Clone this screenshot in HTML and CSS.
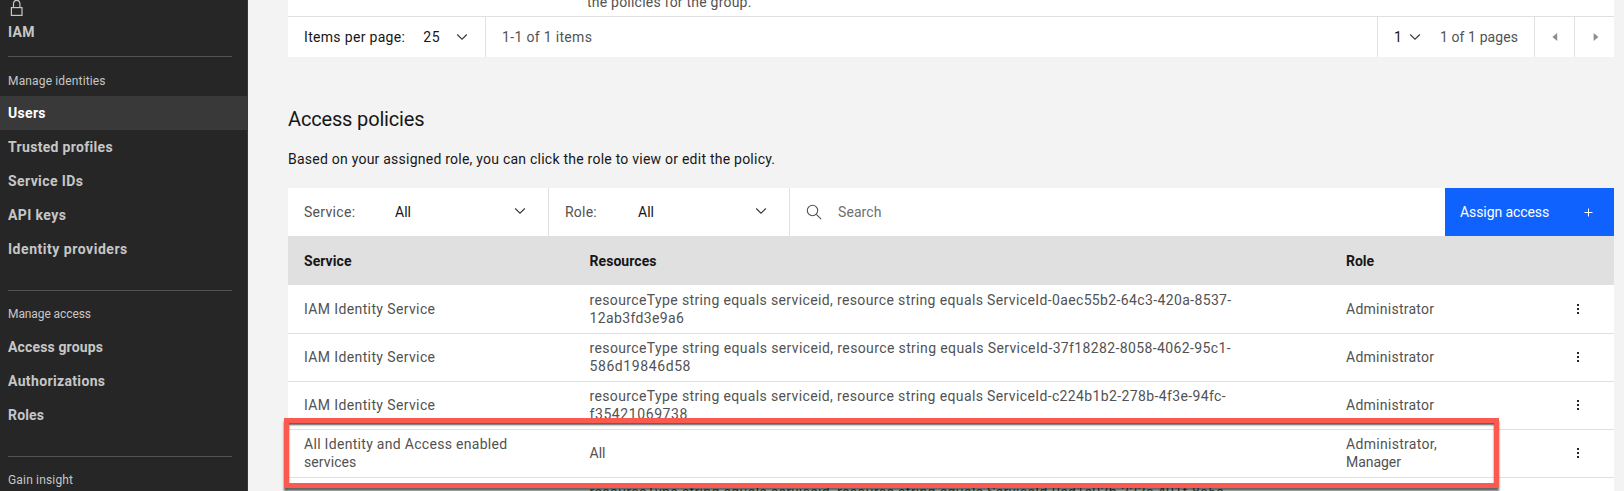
FILE: index.html
```
<!DOCTYPE html>
<html lang="en">
<head>
<meta charset="utf-8">
<title>IAM - Users</title>
<link rel="stylesheet" href="styles.css">
</head>
<body>
<div class="app">
  <nav class="sidebar">
    <div class="brand">
      <svg class="lock" width="16" height="18" viewBox="0 0 16 18" fill="none" stroke="#c6c6c6" stroke-width="1.2"><rect x="3.4" y="8.6" width="10.6" height="7.8"/><path d="M5.5 8.6V4.5a3.2 3.2 0 0 1 6.4 0v4.1"/></svg>
      <span class="brand-name ls30">IAM</span>
    </div>
    <section class="nav-group">
      <h2 class="nav-title ls15">Manage identities</h2>
      <a class="nav-item active ls30">Users</a>
      <a class="nav-item ls32">Trusted profiles</a>
      <a class="nav-item ls40">Service IDs</a>
      <a class="nav-item ls40">API keys</a>
      <a class="nav-item ls50">Identity providers</a>
    </section>
    <section class="nav-group">
      <h2 class="nav-title lsm9">Manage access</h2>
      <a class="nav-item ls15">Access groups</a>
      <a class="nav-item ls35">Authorizations</a>
      <a class="nav-item ls17">Roles</a>
    </section>
    <section class="nav-group">
      <h2 class="nav-title ls17">Gain insight</h2>
    </section>
  </nav>

  <main class="main">
    <div class="groups-tail"><span class="ls22">the policies for the group.</span></div>
    <div class="pagination">
      <div class="page-size">
        <span class="ls32">Items per page:</span>
        <span class="size-value">25</span>
        <svg class="chev" width="12" height="8" viewBox="0 0 12 8"><path d="M1.2 1.5 6 6.2l4.8-4.7"/></svg>
      </div>
      <span class="item-count ls33">1-1 of 1 items</span>
      <div class="page-pick">
        <span class="page-value">1</span>
        <svg class="chev" width="12" height="8" viewBox="0 0 12 8"><path d="M1.2 1.5 6 6.2l4.8-4.7"/></svg>
        <span class="page-total ls9">1 of 1 pages</span>
      </div>
      <div class="page-btn"><svg width="6" height="8" viewBox="0 0 6 8"><path d="M5.2 0v8L.4 4z" fill="#8d8d8d"/></svg></div>
      <div class="page-btn next"><svg width="6" height="8" viewBox="0 0 6 8"><path d="M.6 0v8l4.8-4z" fill="#8d8d8d"/></svg></div>
    </div>

    <h1 class="title">Access policies</h1>
    <p class="desc">Based on your assigned role, you can click the role to view or edit the policy.</p>

    <div class="toolbar">
      <div class="filter filter-service">
        <span class="filter-label ls30">Service:</span>
        <span class="filter-value">All</span>
        <svg class="chev" width="12" height="8" viewBox="0 0 12 8"><path d="M1.2 1.5 6 6.2l4.8-4.7"/></svg>
      </div>
      <div class="filter filter-role">
        <span class="filter-label ls22">Role:</span>
        <span class="filter-value">All</span>
        <svg class="chev" width="12" height="8" viewBox="0 0 12 8"><path d="M1.2 1.5 6 6.2l4.8-4.7"/></svg>
      </div>
      <div class="search">
        <svg width="16" height="16" viewBox="0 0 16 16" fill="none" stroke="#525252" stroke-width="1.1"><circle cx="6.5" cy="6.5" r="5.2"/><path d="m10.3 10.3 4.9 4.9"/></svg>
        <span class="ls9">Search</span>
      </div>
      <button class="assign"><span class="lsm9">Assign access</span><svg width="9" height="9" viewBox="0 0 9 9"><path d="M4.5.5v8M.5 4.5h8" stroke="#fff"/></svg></button>
    </div>

    <div class="table">
      <div class="row head"><span class="ls6">Service</span><span class="ls6">Resources</span><span>Role</span><span></span></div>
      <div class="row first">
        <span class="ls38">IAM Identity Service</span>
        <span class="ls37">resourceType string equals serviceid, resource string equals ServiceId-0aec55b2-64c3-420a-8537-<br>12ab3fd3e9a6</span>
        <span class="ls26">Administrator</span>
        <svg class="dots" width="2" height="10" viewBox="0 0 2 10"><path d="M0 0h2v2H0zM0 4h2v2H0zM0 8h2v2H0z"/></svg>
      </div>
      <div class="row">
        <span class="ls38">IAM Identity Service</span>
        <span class="ls38">resourceType string equals serviceid, resource string equals ServiceId-37f18282-8058-4062-95c1-<br><span class="ls59">586d19846d58</span></span>
        <span class="ls26">Administrator</span>
        <svg class="dots" width="2" height="10" viewBox="0 0 2 10"><path d="M0 0h2v2H0zM0 4h2v2H0zM0 8h2v2H0z"/></svg>
      </div>
      <div class="row">
        <span class="ls38">IAM Identity Service</span>
        <span class="ls37">resourceType string equals serviceid, resource string equals ServiceId-c224b1b2-278b-4f3e-94fc-<br><span class="ls59">f35421069738</span></span>
        <span class="ls26">Administrator</span>
        <svg class="dots" width="2" height="10" viewBox="0 0 2 10"><path d="M0 0h2v2H0zM0 4h2v2H0zM0 8h2v2H0z"/></svg>
      </div>
      <div class="row">
        <span class="ls30">All Identity and Access enabled<br><span class="ls9">services</span></span>
        <span>All</span>
        <span class="ls30">Administrator,<br><span class="lsm4">Manager</span></span>
        <svg class="dots" width="2" height="10" viewBox="0 0 2 10"><path d="M0 0h2v2H0zM0 4h2v2H0zM0 8h2v2H0z"/></svg>
      </div>
      <div class="row">
        <span></span>
        <span class="ls37">resourceType string equals serviceid, resource string equals ServiceId-0ed1e03b-323c-401f-8c5a-<br>&nbsp;</span>
        <span></span>
        <span></span>
      </div>
    </div>
  </main>
  <div class="highlight"></div>
</div>
</body>
</html>
```
FILE: styles.css
```
* { box-sizing: border-box; }
body {
  margin: 0;
  background: #f3f3f3;
  color: #161616;
  font: 14px/18px Roboto, "Liberation Sans", sans-serif;
  overflow: hidden;
}
.app {
  display: flex;
  position: relative;
  height: 491px;
  overflow: hidden;
}

/* Sidebar */
.sidebar {
  width: 248px;
  flex: none;
  background: #262626;
  border-right: 1px solid #393939;
  color: #c6c6c6;
  overflow: hidden;
}
.brand {
  display: flex;
  flex-direction: column;
  height: 56px;
  padding-left: 8px;
}
.lock { display: block; margin-top: -1px; }
.brand-name { margin-top: 6px; font-weight: 700; }
.nav-group { padding-bottom: 24px; }
.nav-title {
  margin: 0 15px 0 8px;
  height: 40px;
  padding-top: 14px;
  border-top: 1px solid #525252;
  font-size: 12px;
  line-height: 18px;
  font-weight: 400;
}
.nav-group:first-of-type .nav-title { padding-top: 15px; }
.nav-item {
  display: block;
  height: 34px;
  padding-left: 8px;
  line-height: 34px;
  font-weight: 700;
}
.nav-item.active { background: #393939; color: #fff; }

/* Main column */
.main {
  flex: 1;
  padding: 0 10px 0 40px;
}
.groups-tail {
  height: 16px;
  padding-left: 299px;
  background: #fff;
  color: #525252;
  overflow: hidden;
}
.groups-tail span { display: block; margin-top: -7px; }
.pagination {
  display: flex;
  height: 41px;
  border-top: 1px solid #e0e0e0;
  background: #fff;
  line-height: 41px;
}
.page-size {
  display: flex;
  align-items: center;
  width: 198px;
  padding-left: 16px;
  border-right: 1px solid #e0e0e0;
}
.size-value { width: 33px; margin-left: 18px; letter-spacing: .75px; }
.item-count { flex: 1; padding-left: 16px; color: #525252; }
.page-pick {
  display: flex;
  align-items: center;
  width: 157px;
  padding-left: 16px;
  border-left: 1px solid #e0e0e0;
}
.page-value { width: 15px; }
.page-total { margin-left: 19px; color: #525252; }
.page-btn {
  display: flex;
  align-items: center;
  justify-content: center;
  width: 40px;
  border-left: 1px solid #e0e0e0;
}
.page-btn.next { padding-left: 2px; }
.chev { flex: none; fill: none; stroke: #393939; stroke-width: 1.1; }
.title {
  margin: 49px 0 0;
  font-size: 20px;
  line-height: 26px;
  font-weight: 400;
  letter-spacing: -.16px;
}
.desc { margin: 18px 0 0; letter-spacing: .235px; }

/* Filter toolbar */
.toolbar {
  display: flex;
  height: 48px;
  margin-top: 20px;
  background: #fff;
}
.filter {
  display: flex;
  align-items: center;
  padding: 0 22px 0 16px;
  border-right: 1px solid #e0e0e0;
}
.filter-service { width: 261px; }
.filter-role { width: 241px; }
.filter-label { color: #525252; }
.filter-service .filter-label { width: 91px; }
.filter-role .filter-label { width: 73px; }
.filter-value { flex: 1; margin-top: -1px; }
.filter .chev { margin-top: -2px; }
.search {
  display: flex;
  flex: 1;
  align-items: center;
  gap: 16px;
  padding-left: 16px;
  color: #6f6f6f;
}
.assign {
  display: flex;
  align-items: center;
  justify-content: space-between;
  width: 169px;
  padding: 0 21px 0 15px;
  border: 0;
  background: #0f62fe;
  color: #fff;
  font: inherit;
}

/* Policy table */
.row {
  display: grid;
  grid-template-columns: 285.5px 756.5px 231px 1fr;
  align-items: center;
  height: 48px;
  padding: 0 0 1px 16px;
  border-bottom: 1px solid #e0e0e0;
  background: #fff;
  color: #525252;
}
.row.head {
  height: 49px;
  padding-bottom: 0;
  border: 0;
  background: #e0e0e0;
  color: #161616;
  font-weight: 700;
}
.row.first { height: 49px; padding-bottom: 0; }
.dots { fill: #262626; }

.highlight {
  position: absolute;
  left: 284px;
  top: 418px;
  width: 1215px;
  height: 70px;
  border: 5px solid #fa5a50;
  box-shadow: 0 3px 2px rgba(0, 0, 0, .6), inset 0 2px 2px rgba(0, 0, 0, .65);
}

/* Letter-spacing steps, in hundredths of a pixel */
.lsm9 { letter-spacing: -.09px; }
.lsm4 { letter-spacing: -.04px; }
.ls6 { letter-spacing: .06px; }
.ls9 { letter-spacing: .09px; }
.ls15 { letter-spacing: .15px; }
.ls17 { letter-spacing: .17px; }
.ls22 { letter-spacing: .22px; }
.ls26 { letter-spacing: .26px; }
.ls30 { letter-spacing: .3px; }
.ls32 { letter-spacing: .32px; }
.ls33 { letter-spacing: .33px; }
.ls35 { letter-spacing: .35px; }
.ls37 { letter-spacing: .37px; }
.ls38 { letter-spacing: .38px; }
.ls40 { letter-spacing: .4px; }
.ls50 { letter-spacing: .53px; }
.ls59 { letter-spacing: .59px; }
```
